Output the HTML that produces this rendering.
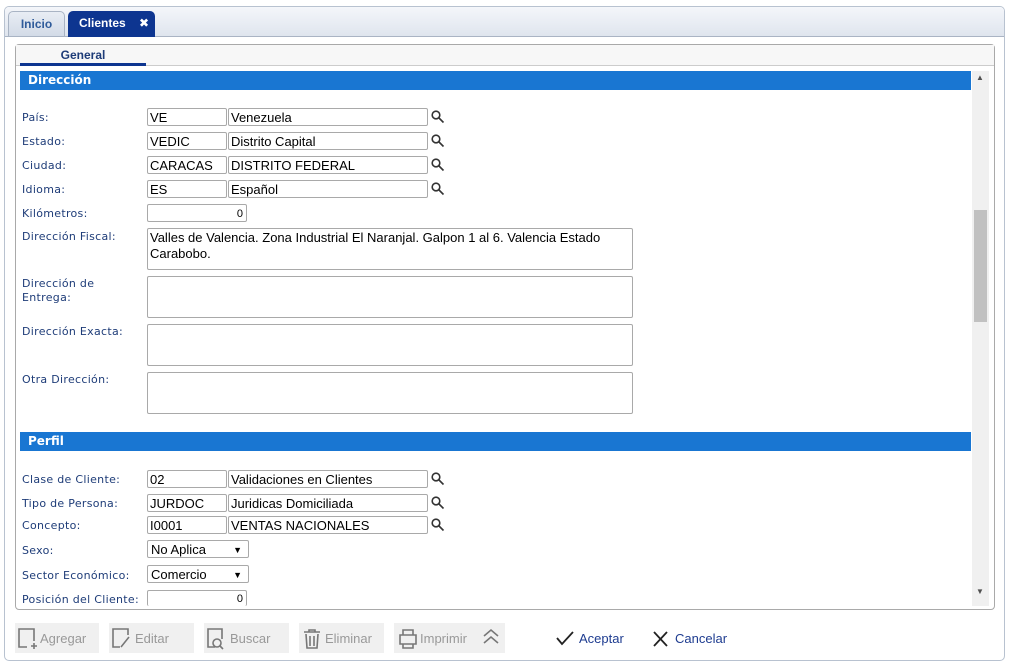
<!DOCTYPE html>
<html><head><meta charset="utf-8"><style>
*{box-sizing:border-box;margin:0;padding:0}
body{width:1010px;height:666px;background:#fff;position:relative;overflow:hidden;font-family:"Liberation Sans","DejaVu Sans",sans-serif}
.abs{position:absolute}
.win{left:4px;top:6px;width:1001px;height:655px;border:1px solid #b8c2d0;border-radius:5px;background:#fff}
.bar{left:5px;top:7px;width:999px;height:30px;background:linear-gradient(#f4f6fa,#dfe5ee);border-bottom:1px solid #aab4c4;border-radius:4px 4px 0 0}
.tab{top:11px;height:26px;border-radius:5px 5px 0 0;font-weight:bold;font-size:12px;line-height:25px;text-align:center}
.panel{left:15px;top:44px;width:980px;height:566px;border:1px solid #a9a9a9;border-radius:4px;background:#fff}
.lbl{font-family:"DejaVu Sans",sans-serif;font-size:11px;color:#1e3c78;letter-spacing:.3px;left:22px}
.inp{border:1px solid #a9a9a9;border-radius:2px;height:18px;font-size:13px;line-height:18px;padding-left:2px;color:#000;background:#fff}
.ta{border:1px solid #a9a9a9;border-radius:2px;left:147px;width:486px;height:42px;font-size:13px;line-height:16px;padding:1px 2px}
.hdr{left:20px;width:951px;height:19px;background:#1976d2;color:#fff;font-weight:bold;font-size:12px;line-height:19px;padding-left:8px;font-family:"DejaVu Sans",sans-serif}
.btn{top:623px;height:30px;background:#f0f0f0;color:#999;font-size:13px;line-height:31px}
.sel{border:1px solid #a9a9a9;border-radius:2px;height:18px;width:102px;left:147px;font-size:13px;line-height:18px;padding-left:3px}
.sel:after{content:"▼";position:absolute;right:6px;top:0;font-size:9px}
</style></head><body>
<div class="abs win"></div>
<div class="abs bar"></div>
<div class="abs tab" style="left:8px;width:57px;background:linear-gradient(#e8edf4,#d3dbe7);border:1px solid #a9b4c4;color:#2f5b9a">Inicio</div>
<div class="abs tab" style="left:68px;width:87px;background:#0d3590;color:#fff;text-align:left;padding-left:11px">Clientes <span style="position:absolute;right:6px;font-size:12px">✖</span></div>
<div class="abs panel"></div>
<div class="abs" style="left:16px;top:45px;width:978px;height:21px;background:#f7f7f7;border-bottom:1px solid #ccc"></div>
<div class="abs" style="left:20px;top:48px;width:126px;text-align:center;font-weight:bold;font-size:12px;color:#1e3c78">General</div>
<div class="abs" style="left:20px;top:63px;width:126px;height:3px;background:#0d3590"></div>
<div class="abs" style="left:972px;top:71px;width:17px;height:535px;background:#f0f0f0"></div>
<div class="abs" style="left:974px;top:210px;width:13px;height:112px;background:#c1c1c1"></div>
<div class="abs" style="left:976px;top:73px;font-size:8px;color:#505050">▲</div>
<div class="abs" style="left:976px;top:587px;font-size:8px;color:#505050">▼</div>
<div class="abs hdr" style="top:71px">Dirección</div>
<div class="abs hdr" style="top:432px">Perfil</div>

<div class="abs lbl" style="top:111px">País:</div>
<div class="abs lbl" style="top:135px">Estado:</div>
<div class="abs lbl" style="top:159px">Ciudad:</div>
<div class="abs lbl" style="top:183px">Idioma:</div>
<div class="abs lbl" style="top:207px">Kilómetros:</div>
<div class="abs lbl" style="top:230px">Dirección Fiscal:</div>
<div class="abs lbl" style="top:277px;line-height:14px">Dirección de<br>Entrega:</div>
<div class="abs lbl" style="top:325px">Dirección Exacta:</div>
<div class="abs lbl" style="top:373px">Otra Dirección:</div>
<div class="abs lbl" style="top:473px">Clase de Cliente:</div>
<div class="abs lbl" style="top:497px">Tipo de Persona:</div>
<div class="abs lbl" style="top:519px">Concepto:</div>
<div class="abs lbl" style="top:544px">Sexo:</div>
<div class="abs lbl" style="top:569px">Sector Económico:</div>
<div class="abs lbl" style="top:593px">Posición del Cliente:</div>

<div class="abs inp" style="left:147px;top:108px;width:80px">VE</div><div class="abs inp" style="left:228px;top:108px;width:200px">Venezuela</div>
<div class="abs inp" style="left:147px;top:132px;width:80px">VEDIC</div><div class="abs inp" style="left:228px;top:132px;width:200px">Distrito Capital</div>
<div class="abs inp" style="left:147px;top:156px;width:80px">CARACAS</div><div class="abs inp" style="left:228px;top:156px;width:200px">DISTRITO FEDERAL</div>
<div class="abs inp" style="left:147px;top:180px;width:80px">ES</div><div class="abs inp" style="left:228px;top:180px;width:200px">Español</div>
<div class="abs inp" style="left:147px;top:204px;width:100px;text-align:right;padding-right:3px;font-size:11px">0</div>
<div class="abs ta" style="top:228px">Valles de Valencia. Zona Industrial El Naranjal. Galpon 1 al 6. Valencia Estado Carabobo.</div>
<div class="abs ta" style="top:276px"></div>
<div class="abs ta" style="top:324px"></div>
<div class="abs ta" style="top:372px"></div>
<div class="abs inp" style="left:147px;top:470px;width:80px">02</div><div class="abs inp" style="left:228px;top:470px;width:200px">Validaciones en Clientes</div>
<div class="abs inp" style="left:147px;top:494px;width:80px">JURDOC</div><div class="abs inp" style="left:228px;top:494px;width:200px">Juridicas Domiciliada</div>
<div class="abs inp" style="left:147px;top:516px;width:80px">I0001</div><div class="abs inp" style="left:228px;top:516px;width:200px">VENTAS NACIONALES</div>
<div class="abs sel" style="top:540px">No Aplica</div>
<div class="abs sel" style="top:565px">Comercio</div>
<div class="abs inp" style="left:147px;top:590px;width:100px;height:16px;border-bottom:none;text-align:right;padding-right:3px;font-size:11px;line-height:17px">0</div>

<svg class="abs" style="left:0;top:0" width="1010" height="666">
<g fill="none" stroke="#333" stroke-width="1.6">
<g transform="translate(431,110)"><circle cx="5" cy="5" r="3.8"/><path d="M8 8l4.5 4.5"/></g>
<g transform="translate(431,134)"><circle cx="5" cy="5" r="3.8"/><path d="M8 8l4.5 4.5"/></g>
<g transform="translate(431,158)"><circle cx="5" cy="5" r="3.8"/><path d="M8 8l4.5 4.5"/></g>
<g transform="translate(431,182)"><circle cx="5" cy="5" r="3.8"/><path d="M8 8l4.5 4.5"/></g>
<g transform="translate(431,472)"><circle cx="5" cy="5" r="3.8"/><path d="M8 8l4.5 4.5"/></g>
<g transform="translate(431,496)"><circle cx="5" cy="5" r="3.8"/><path d="M8 8l4.5 4.5"/></g>
<g transform="translate(431,518)"><circle cx="5" cy="5" r="3.8"/><path d="M8 8l4.5 4.5"/></g>
</g>
</svg>

<div class="abs btn" style="left:15px;width:84px;padding-left:25px">Agregar</div>
<div class="abs btn" style="left:109px;width:85px;padding-left:26px">Editar</div>
<div class="abs btn" style="left:204px;width:85px;padding-left:26px">Buscar</div>
<div class="abs btn" style="left:299px;width:85px;padding-left:26px">Eliminar</div>
<div class="abs btn" style="left:394px;width:111px;padding-left:26px">Imprimir</div>
<div class="abs" style="left:579px;top:631px;font-size:13px;color:#1e3c90">Aceptar</div>
<div class="abs" style="left:675px;top:631px;font-size:13px;color:#1e3c90">Cancelar</div>
<svg class="abs" style="left:0;top:0" width="1010" height="666">
<g fill="none" stroke="#777" stroke-width="1.6">
<path d="M27 647H19V629H34V641M31 646h6M34 643v6"/>
<path d="M120 647h-7V629h15v6M121 647l8-10"/>
<path d="M215 647h-7V629h14v10"/><circle cx="217" cy="643" r="4"/><path d="M220 646l3 3"/>
<path d="M304 632h16M309 632v-2h6v2M306 634l1 14h10l1-14M310 636v10M314 636v10"/>
<path d="M400 635h16v9h-16zM403 635v-5h10v5M403 644v4h10v-4"/>
<path d="M484 636l7-6 7 6M484 643l7-6 7 6"/>
</g>
<g fill="none" stroke="#222" stroke-width="1.8">
<path d="M557 638l5 6 11-12"/>
<path d="M654 632l13 14M667 632l-13 14"/>
</g>
</svg>
</body></html>
